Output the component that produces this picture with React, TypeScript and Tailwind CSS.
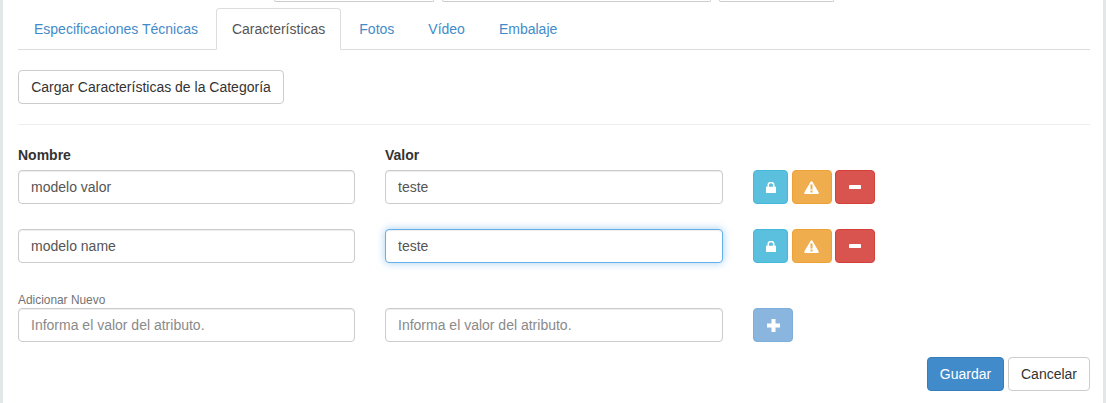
import React from "react";

const LockIcon = () => (
  <svg width="10" height="11" viewBox="0 0 10 11" fill="white">
    <path d="M0 4.8h10v5.6a.6.6 0 0 1-.6.6H.6a.6.6 0 0 1-.6-.6z" />
    <path d="M2.2 5.5V3.2a2.8 2.8 0 0 1 5.6 0v2.3" fill="none" stroke="white" strokeWidth="1.5" />
  </svg>
);
const WarnIcon = () => (
  <svg width="15" height="13" viewBox="0 0 15 13">
    <path d="M7.5 0.2c.4 0 .7.2.9.5l6.3 10.8c.4.7 0 1.4-.8 1.4H1.1c-.8 0-1.2-.7-.8-1.4L6.6.7c.2-.3.5-.5.9-.5z" fill="white" />
    <rect x="6.5" y="3.5" width="2" height="5" fill="#f0ad4e" />
    <rect x="6.5" y="9.5" width="2" height="2" fill="#f0ad4e" />
  </svg>
);
const MinusIcon = () => (
  <svg width="12" height="4" viewBox="0 0 12 4" fill="white"><rect width="12" height="4" rx="0.4" /></svg>
);
const PlusIcon = () => (
  <svg width="13" height="13" viewBox="0 0 13 13" fill="white"><path d="M4.5 0h4v4.5H13v4H8.5V13h-4V8.5H0v-4h4.5z" /></svg>
);

const inputBase =
  "w-full h-[34px] px-3 rounded-[4px] border bg-white text-[14px] text-[#555] outline-none placeholder:text-[#8a8a8a]";

function Input({ value, placeholder, focus }: { value?: string; placeholder?: string; focus?: boolean }) {
  return (
    <input
      readOnly
      value={value}
      placeholder={placeholder}
      className={
        inputBase +
        (focus
          ? " border-[#66afe9] shadow-[inset_0_1px_1px_rgba(0,0,0,0.075),0_0_8px_rgba(102,175,233,0.6)]"
          : " border-[#ccc] shadow-[inset_0_1px_1px_rgba(0,0,0,0.075)]")
      }
    />
  );
}

function Actions() {
  return (
    <div className="flex">
      <button className="w-[35px] h-[34px] mr-1 flex items-center justify-center rounded-[4px] border border-[#46b8da] bg-[#5bc0de]"><LockIcon /></button>
      <button className="w-[40px] h-[34px] mr-[3px] flex items-center justify-center rounded-[4px] border border-[#eea236] bg-[#f0ad4e] pr-[1px]"><WarnIcon /></button>
      <button className="w-[40px] h-[34px] flex items-center justify-center rounded-[4px] border border-[#d43f3a] bg-[#d9534f]"><MinusIcon /></button>
    </div>
  );
}

const rowGrid = "grid grid-cols-[337px_338px_auto] gap-x-[30px]";

export default function App() {
  const tabs = ["Fotos", "Vídeo", "Embalaje"];
  return (
    <div className="h-[403px] w-[1106px] overflow-hidden bg-white font-['Liberation_Sans',Arial,sans-serif] text-[14px] text-[#333] leading-[20px]">
      <div className="h-full w-[1106px] border-l-[3px] border-r-[3px] border-[#e4e7e8] pl-[15px] pr-[13px]">
        <div className="flex h-[2px] items-end pl-[256px]">
          <div className="h-[2px] w-[160px] rounded-b-[4px] border border-t-0 border-[#ccc]" />
          <div className="ml-2 h-[2px] w-[269px] rounded-b-[4px] border border-t-0 border-[#ccc]" />
          <div className="ml-2 h-[2px] w-[115px] rounded-b-[4px] border border-t-0 border-[#ccc]" />
        </div>

        <div className="mt-[6px] flex h-[42px] border-b border-[#ddd]">
          <a className="mr-[2px] h-[41px] rounded-t-[4px] border border-transparent px-[15px] py-[10px] text-[#428bca]">Especificaciones Técnicas</a>
          <a className="mr-[2px] h-[42px] rounded-t-[4px] border border-[#ddd] border-b-white bg-white px-[15px] py-[10px] text-[#555]">Características</a>
          {tabs.map((t) => (
            <a key={t} className="mr-[2px] h-[41px] rounded-t-[4px] border border-transparent px-[15px] py-[10px] text-[#428bca]">{t}</a>
          ))}
        </div>

        <button className="mt-[20px] block h-[34px] w-[266px] rounded-[4px] border border-[#ccc] bg-white text-center text-[14px] text-[#333]">
          Cargar Características de la Categoría
        </button>

        <div className="mt-[20px] border-t border-[#eee]" />

        <div className={rowGrid + " mt-[20px]"}>
          <label className="block h-[20px] font-bold">Nombre</label>
          <label className="block h-[20px] font-bold">Valor</label>
          <div />
        </div>
        <div className={rowGrid + " mt-[5px]"}>
          <Input value="modelo valor" />
          <Input value="teste" />
          <Actions />
        </div>
        <div className={rowGrid + " mt-[25px]"}>
          <Input value="modelo name" />
          <Input value="teste" focus />
          <Actions />
        </div>

        <div className="mt-[29px] h-[16px] text-[11.9px] leading-[16px] text-[#737373]">Adicionar Nuevo</div>
        <div className={rowGrid}>
          <Input placeholder="Informa el valor del atributo." />
          <Input placeholder="Informa el valor del atributo." />
          <button className="flex h-[34px] w-[40px] items-center justify-center rounded-[4px] border border-[#7eaedb] bg-[#89b5de]"><PlusIcon /></button>
        </div>

        <div className="mt-[15px] flex justify-end gap-1">
          <button className="h-[34px] w-[77px] rounded-[4px] border border-[#357ebd] bg-[#428bca] text-[14px] text-white">Guardar</button>
          <button className="h-[34px] w-[82px] rounded-[4px] border border-[#ccc] bg-white text-[14px] text-[#333]">Cancelar</button>
        </div>
      </div>
    </div>
  );
}
